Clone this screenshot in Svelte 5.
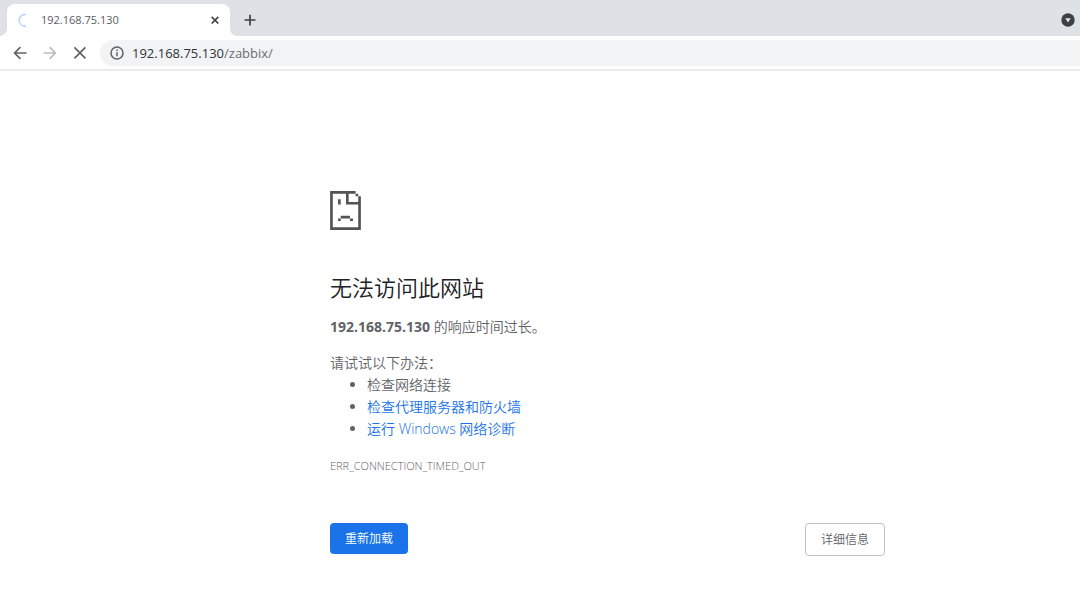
<script lang="ts">
  const host = "192.168.75.130";

  const suggestions = [
    { text: "检查网络连接", link: false },
    { text: "检查代理服务器和防火墙", link: true },
    { text: "运行 Windows 网络诊断", link: true }
  ];

  let address = $state("/zabbix/");
</script>

<div class="browser">
  <div class="tab-strip">
    <div class="tab">
      <svg class="spinner" viewBox="0 0 16 16" aria-hidden="true">
        <path d="M8 2.2C4.2 2.2 1.2 4.8 1.2 8.4S4.2 14.4 8 14.4" />
      </svg>
      <span class="tab-title">{host}</span>
      <button class="tab-close" type="button" aria-label="关闭标签页">
        <svg viewBox="0 0 8 8"><path d="M.7.9l6.6 6.6M7.3.9L.7 7.5" /></svg>
      </button>
    </div>
    <button class="new-tab" type="button" aria-label="新标签页">
      <svg viewBox="0 0 12 12"><path d="M6 .7v10.8M.5 6h11" /></svg>
    </button>
    <button class="tab-search" type="button" aria-label="搜索标签页">
      <svg viewBox="0 0 14 14">
        <circle cx="7" cy="7" r="6.7" />
        <path d="M4.2 5.2h5.6L7 9.4z" />
      </svg>
    </button>
  </div>

  <div class="toolbar">
    <button class="nav" type="button" aria-label="后退">
      <svg viewBox="0 0 14 14"><path d="M13.5 7H2M7.4 1.2L1.6 7l5.8 5.8" /></svg>
    </button>
    <button class="nav" type="button" aria-label="前进" disabled>
      <svg viewBox="0 0 14 14"><path d="M.5 7H12M6.6 1.2L12.4 7l-5.8 5.8" /></svg>
    </button>
    <button class="nav" type="button" aria-label="停止">
      <svg viewBox="0 0 14 14"><path d="M1.4 1.4l11 11M12.4 1.4l-11 11" /></svg>
    </button>
    <label class="omnibox">
      <svg viewBox="0 0 14 14" aria-hidden="true">
        <circle cx="7" cy="7" r="6" />
        <path d="M7 6.2v4M7 3.6v1.5" />
      </svg>
      <span class="host">{host}</span>
      <input type="text" aria-label="地址" bind:value={address} />
    </label>
  </div>
</div>

<main>
  <div class="content">
    <svg class="sad-page" viewBox="0 0 93 118" aria-hidden="true">
      <path d="M0 0h77v8h8v8h8v102H0zM8 8v102h77V41H48V8zM56 8v25h29V16h-8V8z" fill-rule="evenodd" />
      <path d="M24 25h8v16h-8zM32 75h28v8H32zM24 83h8v8h-8zM60 83h9v8h-9z" />
    </svg>

    <h1>无法访问此网站</h1>
    <p><strong>{host}</strong> 的响应时间过长。</p>

    <div class="suggestions">
      <p>请试试以下办法：</p>
      <ul>
        {#each suggestions as item}
          <li>
            {#if item.link}
              <a href="#help">{item.text}</a>
            {:else}
              {item.text}
            {/if}
          </li>
        {/each}
      </ul>
    </div>

    <div class="error-code">ERR_CONNECTION_TIMED_OUT</div>

    <div class="buttons">
      <button class="reload" type="button">重新加载</button>
      <button class="details" type="button">详细信息</button>
    </div>
  </div>
</main>

<style>
  :global(body) {
    background: #fff;
    color: #5f6368;
    font-family: "Open Sans", "Noto Sans CJK SC", sans-serif;
    font-size: 14px;
    font-weight: 350;
    line-height: 22px;
  }

  button {
    font-family: inherit;
    font-weight: inherit;
    padding: 0;
    border: none;
    background: transparent;
    cursor: pointer;
  }

  svg {
    display: block;
    flex: none;
  }

  strong {
    font-weight: 700;
  }

  .browser {
    font-weight: 400;
  }

  .browser svg {
    fill: none;
    stroke: currentColor;
  }

  .tab-strip {
    display: flex;
    align-items: center;
    height: 36px;
    padding: 0 5px 0 7px;
    background: #dee1e6;
  }

  .tab {
    position: relative;
    display: flex;
    align-items: center;
    align-self: flex-end;
    box-sizing: border-box;
    width: 223px;
    height: 32px;
    padding: 0 11px;
    border-radius: 8px 8px 0 0;
    background: #fff;
  }

  .tab::before,
  .tab::after {
    content: "";
    position: absolute;
    bottom: 0;
    width: 8px;
    height: 8px;
  }

  .tab::before {
    right: 100%;
    background: radial-gradient(circle at 0 0, transparent 8px, #fff 8px);
  }

  .tab::after {
    left: 100%;
    background: radial-gradient(circle at 100% 0, transparent 8px, #fff 8px);
  }

  .spinner {
    width: 16px;
    height: 16px;
    color: #b9d5fb;
    stroke-width: 1.6;
  }

  .tab-title {
    flex: 1;
    margin-left: 7px;
    color: #5a5d61;
    font-size: 11px;
  }

  .tab-close {
    color: #3c4043;
  }

  .tab-close svg {
    width: 8px;
    height: 8px;
    stroke-width: 1.6;
  }

  .new-tab {
    margin: 4px auto 0 14px;
    color: #3c4043;
  }

  .new-tab svg {
    width: 12px;
    height: 12px;
    stroke-width: 1.7;
  }

  .tab-search {
    margin-top: 4px;
  }

  .tab-search svg {
    width: 14px;
    height: 14px;
    stroke: none;
  }

  .tab-search circle {
    fill: #3c4043;
  }

  .tab-search path {
    fill: #dee1e6;
  }

  .toolbar {
    display: flex;
    align-items: center;
    gap: 16px;
    height: 33px;
    padding-left: 13px;
    border-bottom: 2px solid #ececee;
  }

  .nav {
    color: #5f6368;
  }

  .nav:disabled {
    color: #babcbe;
  }

  .nav svg {
    width: 14px;
    height: 14px;
    stroke-width: 1.7;
  }

  .omnibox {
    display: flex;
    align-items: center;
    flex: 1;
    height: 26px;
    margin-left: -3px;
    padding-left: 10px;
    border-radius: 13px 0 0 13px;
    background: #f1f3f4;
  }

  .omnibox svg {
    width: 14px;
    height: 14px;
    margin-right: 8px;
    stroke-width: 1.5;
  }

  .host {
    color: #303336;
    font-size: 13px;
  }

  .omnibox input {
    flex: 1;
    min-width: 0;
    padding: 0;
    border: none;
    outline: none;
    background: transparent;
    color: #6b6f73;
    font: inherit;
    font-size: 13px;
  }

  main {
    padding: 120px 24px 32px 159px;
  }

  .content {
    max-width: 555px;
    margin: 0 auto;
  }

  .sad-page {
    width: 31px;
    height: 39px;
    fill: #535353;
  }

  h1 {
    margin: 43px 0 15px;
    color: #202124;
    font-size: 22px;
    font-weight: 350;
    line-height: 28px;
  }

  p {
    margin: 0;
  }

  .suggestions {
    margin-top: 14px;
  }

  ul {
    margin: 0;
    padding-left: 37px;
  }

  a {
    color: #1a73e8;
    text-decoration: none;
  }

  .error-code {
    margin-top: 15px;
    font-size: 11px;
  }

  .buttons {
    display: flex;
    align-items: flex-start;
    justify-content: space-between;
    margin-top: 46px;
  }

  .reload,
  .details {
    padding: 0 15px;
    border-radius: 4px;
    font-size: 12px;
    line-height: 31px;
  }

  .reload {
    background: #1a73e8;
    color: #fff;
  }

  .details {
    border: 1px solid #bdc1c6;
    color: #5f6368;
  }
</style>
